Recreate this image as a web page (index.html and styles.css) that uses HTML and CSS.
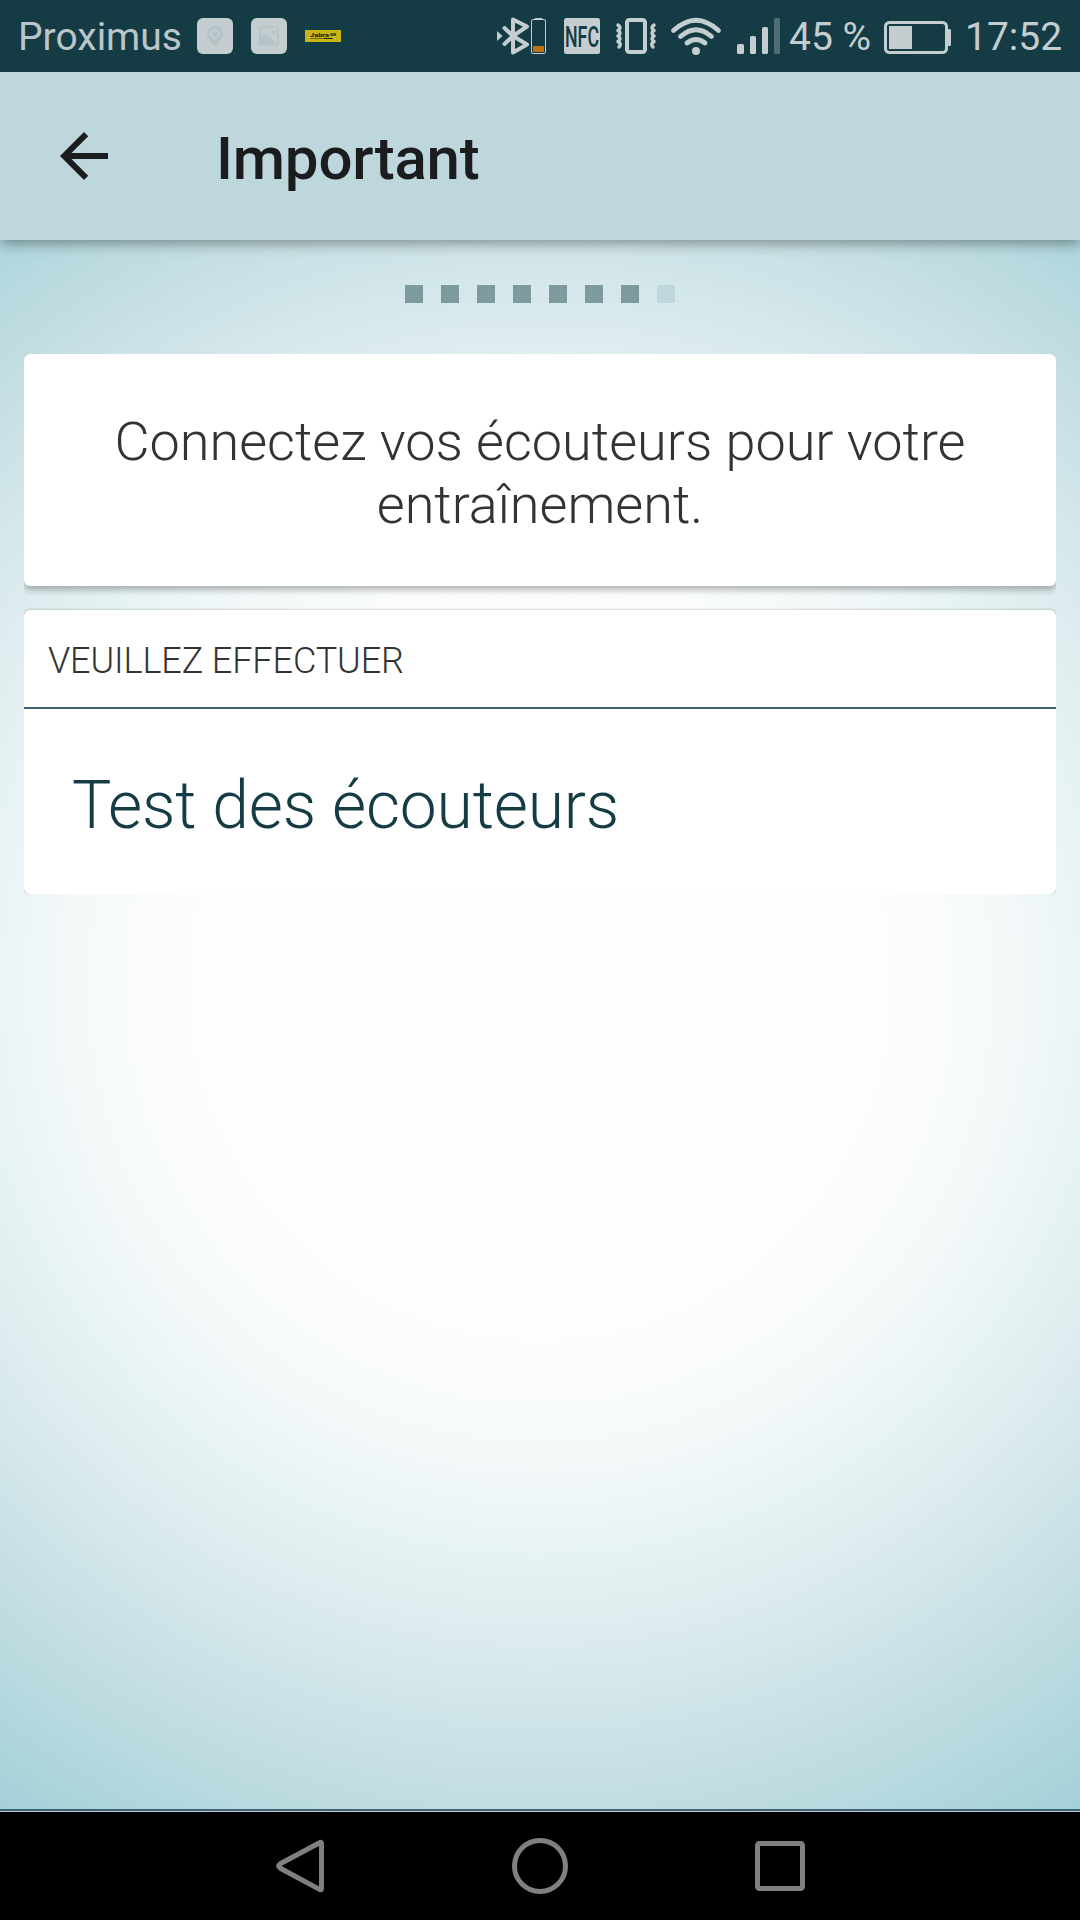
FILE: index.html
```html
<!DOCTYPE html>
<html lang="fr">
<head>
<meta charset="utf-8">
<title>Important</title>
<link rel="stylesheet" href="styles.css">
</head>
<body>
<div class="screen">
  <div class="status-bar">
    <span class="carrier">Proximus</span>
    <svg class="icon notification" width="36" height="36" viewBox="0 0 36 36">
      <rect width="36" height="36" rx="6" fill="#c4cdd0"/>
      <path d="M18 8c-4.500 0-8 3.500-8 8 0 5.500 8 12 8 12s8-6.500 8-12c0-4.500-3.500-8-8-8z" fill="#b3c3c7"/>
      <circle cx="18" cy="16" r="4" fill="#b3c3c7" stroke="#c4cdd0" stroke-width="2"/>
    </svg>
    <svg class="icon notification" width="36" height="36" viewBox="0 0 36 36">
      <rect width="36" height="36" rx="6" fill="#c4cdd0"/>
      <rect x="9" y="9" width="18" height="18" rx="1" fill="none" stroke="#b3c3c7" stroke-width="1.600"/>
      <path d="M9 20l6-4 11 10H9z" fill="#b3c3c7"/>
      <circle cx="22" cy="14" r="2" fill="#b3c3c7"/>
    </svg>
    <svg class="icon brand" width="36" height="12" viewBox="0 0 36 12">
      <rect width="36" height="12" fill="#c8b713"/>
      <text class="brand-text" x="5" y="7" textLength="19" lengthAdjust="spacingAndGlyphs" font-size="6">Jabra</text>
      <text class="brand-text" x="25" y="6" textLength="6" lengthAdjust="spacingAndGlyphs" font-size="4">GN</text>
      <path d="M5 8.500h14" stroke="#575211" stroke-width="0.800"/><path d="M19 8.500h9" stroke="#25290f" stroke-width="1"/>
    </svg>
    <div class="system">
      <svg class="icon" width="50" height="36" viewBox="496 18 50 36">
        <path d="M497 31l5.500 5-5.500 5z" fill="#c4cdd0"/>
        <path d="M504.500 28L513 36l14 8.500-14 8V19.500l14 7L513 36l-8.500 8" fill="none" stroke="#c4cdd0" stroke-width="4" stroke-linecap="round" stroke-linejoin="round"/>
        <path d="M535 19.500V18.500h7v1" fill="none" stroke="#c4cdd0"/>
        <rect x="531.500" y="19.500" width="14" height="34" rx="1.500" fill="none" stroke="#c4cdd0"/>
        <rect x="533" y="46" width="11" height="6" fill="#bf7210"/>
      </svg>
      <svg class="icon nfc" width="36" height="36" viewBox="0 0 36 36">
        <rect width="36" height="36" rx="2.500" fill="#c4cdd0"/>
        <text x="1" y="28.500" textLength="34" lengthAdjust="spacingAndGlyphs" class="nfc-text">NFC</text>
      </svg>
      <svg class="icon vibrate" width="42" height="36" viewBox="615 18 42 36">
        <rect x="627" y="20" width="18" height="32" rx="2.500" fill="none" stroke="#c4cdd0" stroke-width="4"/>
        <path d="M618 25q4 2.750 0 5.500q4 2.750 0 5.500q4 2.750 0 5.500q4 2.750 1 5.500M654 25q-4 2.750 0 5.500q-4 2.750 0 5.500q-4 2.750 0 5.500q-4 2.750-1 5.500" fill="none" stroke="#c4cdd0" stroke-width="3.500" stroke-linecap="round" stroke-linejoin="round"/>
      </svg>
      <svg class="icon wifi" width="52" height="38" viewBox="670 17 52 38">
        <g fill="none" stroke="#c4cdd0" stroke-width="4.800" stroke-linecap="round">
          <path d="M673.500 30.500q22.500-20.500 45 0"/>
          <path d="M680.500 36.500q15.500-13.500 31 0"/>
          <path d="M687 43q9-7 18 0"/>
        </g>
        <circle cx="696" cy="51" r="4" fill="#c4cdd0"/>
      </svg>
      <svg class="icon signal" width="43" height="36" viewBox="0 0 43 36" fill="#c4cdd0">
        <rect y="26" width="7" height="10" rx="1.500"/>
        <rect x="13" y="18" width="6" height="18" rx="1.500"/>
        <rect x="25" y="9" width="6" height="27" rx="1.500"/>
        <rect x="37" width="6" height="36" rx="1.500" fill="#506d74"/>
      </svg>
      <span class="percent">45 %</span>
      <svg class="icon battery" width="67" height="33" viewBox="0 0 67 33">
        <rect x="1.500" y="1.500" width="61" height="30" rx="4" fill="none" stroke="#c4cdd0" stroke-width="3"/>
        <path d="M5 5h23v23H5zM64 8h1.500q1.500 0 1.500 1.500v14q0 1.500-1.500 1.500H64z" fill="#c4cdd0"/>
      </svg>
      <span class="clock">17:52</span>
    </div>
  </div>

  <header class="toolbar">
    <svg class="back" width="72" height="72" viewBox="0 0 24 24"><path d="M20 11H7.830l5.590-5.590L12 4l-8 8 8 8 1.410-1.410L7.830 13H20z" fill="#1a1c1d"/></svg>
    <h1 class="title">Important</h1>
  </header>

  <main class="content">
    <div class="steps">
      <i class="step"></i><i class="step"></i><i class="step"></i><i class="step"></i><i class="step"></i><i class="step"></i><i class="step"></i><i class="step step-last"></i>
    </div>
    <section class="card message">Connectez vos écouteurs pour votre entraînement.</section>
    <section class="card task">
      <h2 class="task-heading">VEUILLEZ EFFECTUER</h2>
      <div class="task-item">Test des écouteurs</div>
    </section>
  </main>

  <nav class="nav-bar">
    <svg width="56" height="56" viewBox="0 0 56 56" class="nav-icon"><path d="M49.500 5.500v45q0 2-2 .8L8.300 30.300q-3.400-2.300 0-4.600L47.500 4.700q2-1.200 2 .8z"/></svg>
    <svg width="56" height="56" viewBox="0 0 56 56" class="nav-icon"><circle cx="28" cy="28" r="25.500"/></svg>
    <svg width="56" height="56" viewBox="0 0 56 56" class="nav-icon"><rect x="5.500" y="5.500" width="45" height="45" rx="2"/></svg>
  </nav>
</div>
</body>
</html>
```
FILE: styles.css
```css
* { box-sizing: border-box; }

body {
  margin: 0;
  font-family: Roboto, sans-serif;
}

.screen {
  display: flex;
  flex-direction: column;
  width: 1080px;
  height: 1920px;
  overflow: hidden;
}

.status-bar {
  display: flex;
  align-items: center;
  flex: 0 0 72px;
  padding: 0 18px;
  background: #153c45;
  color: #c4cdd0;
  font-size: 39px;
  line-height: 46px;
  white-space: nowrap;
}

.icon { display: block; flex: none; overflow: visible; }
.carrier { width: 179px; padding-top: 2px; color: #b9c6ca; }
.notification { margin-right: 18px; }
.brand-text { font-family: Roboto, sans-serif; font-weight: 900; fill: #25290f; }
.system { display: flex; align-items: center; margin-left: auto; }
.nfc { margin-left: 18px; }
.nfc-text { font-family: Roboto, sans-serif; font-size: 29px; font-weight: 500; fill: #153c45; }
.vibrate { margin-left: 15px; }
.wifi { margin-left: 13px; }
.signal { margin-left: 15px; }
.percent { width: 95px; padding: 2px 0 0 9px; }
.battery { margin: 3px 14px 0 9px; }
.clock { width: 97px; padding-top: 2px; }

.toolbar {
  display: flex;
  align-items: center;
  flex: 0 0 168px;
  padding: 0 48px;
  background: #bed7dc;
  box-shadow: 0 4px 12px rgba(0, 0, 0, 0.36);
  clip-path: inset(0 0 -24px 0);
  z-index: 1;
}

.title {
  margin: 5px 0 0 96px;
  color: #1a1c1d;
  font-size: 60px;
  font-weight: 500;
  letter-spacing: -0.2px;
  line-height: 70px;
}

.content {
  flex: 1;
  padding: 45px 24px 0;
  border-bottom: 1px solid #b9ccd8;
  box-shadow: inset 0 -2px #3f6375;
  background: radial-gradient(1040px 1050px at 540px 745px, #fdfdfd 0%, #fdfdfd 32%, #fbfcfd 37%, #f3f8f9 46%, #eaf4f6 52%, #e3f0f2 57%, #dbebed 63%, #d1e5e9 69%, #c0dce1 79%, #b2d7de 86%, #a4d0d7 94%);
}

.steps {
  display: flex;
  justify-content: center;
  gap: 18px;
  margin-bottom: 51px;
}

.step { width: 18px; height: 18px; background: #7d9a9f; }
.step-last { background: #bdd7dc; }

.card { border-radius: 6px; background: #fff; }

.message {
  height: 232px;
  margin-bottom: 24px;
  padding: 56px 60px 0;
  box-shadow: 0 4px 6px rgba(0, 0, 0, 0.28);
  clip-path: inset(0 0 -14px 0);
  color: #333;
  font-size: 54px;
  font-weight: 300;
  line-height: 63px;
  text-align: center;
}

.task {
  height: 284px;
  box-shadow: 0 0 3px rgba(0, 0, 0, 0.3);
  clip-path: inset(-4px 0 0 0);
}

.task-heading {
  height: 99px;
  margin: 0;
  padding: 30px 24px 0;
  border-bottom: 2px solid #3f6375;
  color: #333;
  font-size: 36px;
  font-weight: 300;
  letter-spacing: -0.1px;
  line-height: 42px;
}

.task-item {
  padding: 58px 48px 0;
  color: #153c45;
  font-size: 66px;
  font-weight: 300;
  letter-spacing: -0.17px;
  line-height: 77px;
}

.nav-bar {
  display: flex;
  align-items: center;
  justify-content: center;
  gap: 184px;
  flex: 0 0 108px;
  background: #000;
}

.nav-icon { fill: none; stroke: #808080; stroke-width: 5; }
```
